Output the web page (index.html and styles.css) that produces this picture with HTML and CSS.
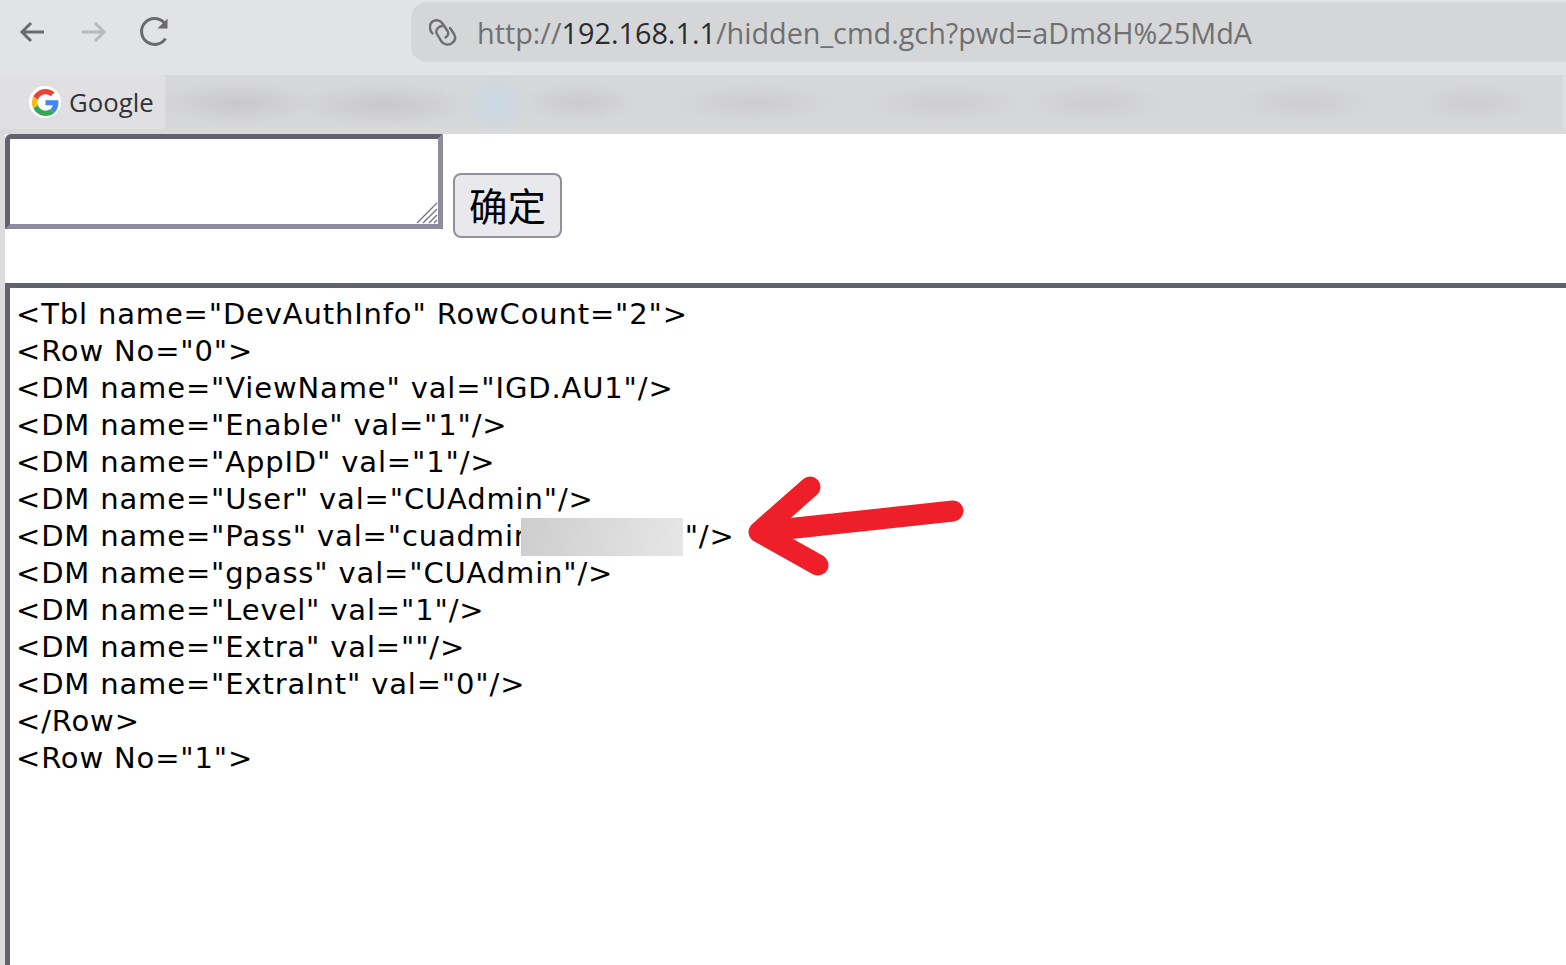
FILE: index.html
```html
<!DOCTYPE html>
<html lang="zh">
<head>
<meta charset="utf-8">
<title>hidden_cmd</title>
<link rel="stylesheet" href="styles.css">
</head>
<body>
<div class="toolbar">
  <div class="nav">
    <svg class="nav-icon" viewBox="0 0 32 32"><path d="M28 16H6M15 7l-9 9 9 9"/></svg>
    <svg class="nav-icon dim" viewBox="0 0 32 32"><path d="M4 16h22M17 7l9 9-9 9"/></svg>
    <svg class="nav-icon reload" viewBox="0 0 32 32"><path d="M26.5 22.5A13 13 0 1 1 25 6.5"/><path class="fill" d="M28.5 2.500v10h-10z"/></svg>
  </div>
  <div class="address">
    <svg class="link-icon" viewBox="0 0 28 28"><path d="M3.500 15.500C0 12 0 6 3.500 3.500C7 1 11.500 2.500 13.500 5.500L18.500 13C20 15.500 19 18 16.500 19.500"/><path d="M13 8C9 8.500 6 12.500 8 16L12.500 23.500C14.500 26.500 19 27.500 22.500 25.500C26.500 23 27 19.500 25 16L21 10"/></svg>
    <span class="url"><span class="muted">http://</span>192.168.1.1<span class="muted">/hidden_cmd.gch?pwd=aDm8H%25MdA</span></span>
  </div>
</div>
<div class="bookmarks">
  <div class="bookmark">
    <span class="favicon">
      <svg viewBox="0 0 48 48"><path fill="#EA4335" d="M24 9.500c3.500 0 6.700 1.300 9.200 3.600l6.900-6.900C35.900 2.400 30.500 0 24 0 14.600 0 6.500 5.400 2.600 13.200l8 6.200C12.500 13.700 17.800 9.500 24 9.500z"/><path fill="#4285F4" d="M47 24.500c0-1.600-.2-3.100-.4-4.500H24v9h12.900c-.6 3-2.300 5.500-4.800 7.200l7.700 6C44.300 37.900 47 31.800 47 24.500z"/><path fill="#FBBC05" d="M10.500 28.600c-.5-1.500-.8-3-.8-4.600s.3-3.100.8-4.600l-8-6.200C.9 16.500 0 20.100 0 24s.9 7.500 2.600 10.800l7.900-6.200z"/><path fill="#34A853" d="M24 48c6.500 0 11.900-2.100 15.900-5.800l-7.700-6c-2.100 1.400-4.900 2.300-8.200 2.300-6.200 0-11.500-4.200-13.400-9.900l-8 6.200C6.500 42.600 14.600 48 24 48z"/></svg>
    </span>
    <span class="bookmark-label">Google</span>
  </div>
  <div class="blurred"></div>
</div>
<div class="divider"></div>
<main class="page">
  <form class="cmd-form">
    <span class="input-wrap">
      <textarea class="cmd-input"></textarea>
      <svg class="grip" viewBox="0 0 22 22"><path d="M1 21 21 1M7 21 21 7M13 21 21 13M18 21 21 18"/></svg>
    </span>
    <button class="cmd-submit" type="button">确定</button>
  </form>
  <div class="result">
    <div class="line">&lt;Tbl name="DevAuthInfo" RowCount="2"&gt;</div>
    <div class="line">&lt;Row No="0"&gt;</div>
    <div class="line">&lt;DM name="ViewName" val="IGD.AU1"/&gt;</div>
    <div class="line">&lt;DM name="Enable" val="1"/&gt;</div>
    <div class="line">&lt;DM name="AppID" val="1"/&gt;</div>
    <div class="line">&lt;DM name="User" val="CUAdmin"/&gt;</div>
    <div class="line">&lt;DM name="Pass" val="cuadmir<span class="redacted"></span>"/&gt;</div>
    <div class="line">&lt;DM name="gpass" val="CUAdmin"/&gt;</div>
    <div class="line">&lt;DM name="Level" val="1"/&gt;</div>
    <div class="line">&lt;DM name="Extra" val=""/&gt;</div>
    <div class="line">&lt;DM name="ExtraInt" val="0"/&gt;</div>
    <div class="line">&lt;/Row&gt;</div>
    <div class="line">&lt;Row No="1"&gt;</div>
  </div>
  <svg class="arrow" viewBox="0 0 240 120"><path d="M219 36 25 57M76 12 25 57 84 90"/></svg>
</main>
</body>
</html>
```
FILE: styles.css
```css
* { box-sizing: border-box; }
html, body { margin: 0; height: 965px; overflow: hidden; }
body { background: #dcdcdf; font-family: "DejaVu Sans", sans-serif; display: flex; flex-direction: column; }

.toolbar { height: 75px; flex: none; display: flex; align-items: flex-start; background: #e2e3e5; padding-top: 2px; }
.nav { width: 411px; height: 60px; flex: none; display: flex; align-items: center; gap: 29.500px; padding-left: 16px; }
.nav-icon { width: 32px; height: 32px; fill: none; stroke: #6a6a6c; stroke-width: 3; }
.nav-icon.dim { stroke: #b9b9bb; }
.nav-icon .fill { fill: #6a6a6c; stroke: none; }
.address { flex: 1; height: 60px; background: #d5d6d8; border-radius: 16px 0 0 16px; display: flex; align-items: center; padding-left: 18px; gap: 20px; }
.link-icon { width: 28px; height: 28px; fill: none; stroke: #6e6e70; stroke-width: 2.4; stroke-linecap: round; flex: none; }
.url { font-family: "Open Sans", sans-serif; font-size: 28.8px; color: #2b2b2d; white-space: nowrap; }
.muted { color: #707072; }

.bookmarks { height: 54px; flex: none; display: flex; background: #e0e0e3; }
.bookmark { width: 165px; flex: none; display: flex; align-items: center; padding-left: 29px; gap: 8px; }
.favicon { width: 32px; height: 32px; background: #fff; border-radius: 50%; display: flex; align-items: center; justify-content: center; }
.favicon svg { width: 27px; height: 27px; }
.bookmark-label { font-family: "Open Sans", sans-serif; font-size: 25.8px; color: #333335; }
.blurred {
  width: 1398px; flex: none;
  background:
    radial-gradient(ellipse 34px 30px at 332px 30px, #c8d8e3, transparent),
    radial-gradient(ellipse 80px 22px at 72px 28px, #c8c8ca, transparent),
    radial-gradient(ellipse 90px 22px at 220px 30px, #c8c8ca, transparent),
    radial-gradient(ellipse 60px 20px at 415px 27px, #cbcbcd, transparent),
    radial-gradient(ellipse 80px 20px at 590px 28px, #cccccf, transparent),
    radial-gradient(ellipse 80px 20px at 780px 28px, #cdcdcf, transparent),
    radial-gradient(ellipse 70px 20px at 930px 28px, #cdcdcf, transparent),
    radial-gradient(ellipse 70px 20px at 1140px 28px, #cdcdcf, transparent),
    radial-gradient(ellipse 60px 20px at 1310px 28px, #cdcdcf, transparent),
    #d6d7d9;
}
.divider { height: 5px; flex: none; background: #dadadc; }

.page { flex: 1; position: relative; margin-left: 5px; background: #fff; color: #000; min-height: 0; }
.cmd-form { height: 149px; display: flex; align-items: flex-start; gap: 10px; }
.input-wrap { position: relative; display: block; line-height: 0; }
.cmd-input { display: block; width: 438px; height: 95px; margin: 0; border-width: 5px; border-style: solid; border-color: #62626e #8e8c9a #8e8c9a #62626e; border-top-left-radius: 6px; background: #fff; resize: none; }
.grip { position: absolute; right: 5px; bottom: 5px; width: 22px; height: 22px; fill: none; stroke: #77777f; stroke-width: 1.4; }
.cmd-submit { margin-top: 39px; width: 109px; height: 65px; border: 2px solid #8f8f9d; border-radius: 8px; background: #e9e9ed; color: #000; font-family: "Noto Sans CJK SC", sans-serif; font-size: 38.500px; padding: 0 0 3px; }

.result { height: 700px; border-style: solid; border-width: 5px 0 0 5px; border-color: #62626e; padding: 8px 0 0 6px; font-size: 29px; letter-spacing: 0.85px; line-height: 37px; white-space: nowrap; overflow: hidden; }
.redacted { display: inline-block; width: 162px; height: 38px; margin: -3px 2px -1px -6px; vertical-align: middle; background: linear-gradient(100deg, #cdcdcd, #e6e6e6); }

.arrow { position: absolute; left: 729px; top: 341px; width: 240px; height: 120px; fill: none; stroke: #ee1f28; stroke-width: 21; stroke-linecap: round; stroke-linejoin: round; }
```
